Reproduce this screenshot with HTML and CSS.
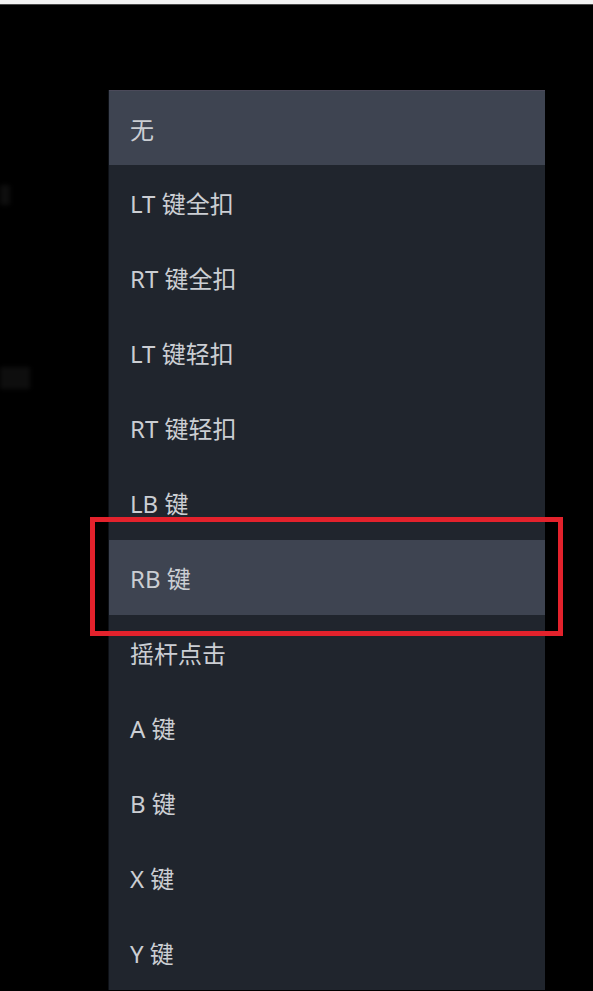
FILE: index.html
```html
<!DOCTYPE html>
<html lang="zh-CN">
<head>
    <meta charset="UTF-8">
    <meta name="viewport" content="width=device-width, initial-scale=1.0">
    <title>按键选择</title>
    <link rel="stylesheet" href="styles.css">
</head>
<body>
    <div class="top-strip"></div>

    <!-- dimmed page behind the dropdown -->
    <div class="backdrop">
        <div class="ghost ghost-one"></div>
        <div class="ghost ghost-two"></div>
    </div>

    <div class="screen">
        <ul class="menu">
            <li class="menu-item active">无</li>
            <li class="menu-item">LT 键全扣</li>
            <li class="menu-item">RT 键全扣</li>
            <li class="menu-item">LT 键轻扣</li>
            <li class="menu-item">RT 键轻扣</li>
            <li class="menu-item">LB 键</li>
            <li class="menu-item active">RB 键</li>
            <li class="menu-item">摇杆点击</li>
            <li class="menu-item">A 键</li>
            <li class="menu-item">B 键</li>
            <li class="menu-item">X 键</li>
            <li class="menu-item">Y 键</li>
        </ul>
        <div class="mark"></div>
    </div>
</body>
</html>
```

FILE: styles.css
```css
/* Global Styles */
html, body {
    height: 100%;
}

body {
    margin: 0;
    padding: 0;
    background-color: #000;
    font-family: "Noto Sans", "Noto Sans CJK SC", sans-serif;
    color: #cbced3;
    overflow: hidden;
    position: relative;
}

.top-strip {
    height: 4px;
    background: #f2f2f2;
    border-bottom: 1px solid #4a4a4a;
}

/* Dimmed page behind */
.backdrop {
    position: absolute;
    inset: 5px 0 0 0;
    pointer-events: none;
}

.ghost {
    position: absolute;
    left: 0;
    background: #0e0e0e;
    filter: blur(2px);
}

.ghost-one {
    top: 180px;
    width: 10px;
    height: 20px;
}

.ghost-two {
    top: 362px;
    width: 30px;
    height: 22px;
}

/* Dropdown */
.screen {
    position: relative;
    padding-top: 85px;
}

.menu {
    list-style: none;
    margin: 0 0 0 108px;
    padding: 0;
    width: 437px;
    background: #20252d;
    border-left: 1px solid #0d1016;
    box-sizing: border-box;
}

.menu-item {
    height: 75px;
    display: flex;
    align-items: center;
    padding-left: 21px;
    font-size: 24px;
}

.menu-item.active {
    background: #3e4451;
}

.menu-item:first-child {
    border-top: 1px solid #4b4a5a;
    height: 74px;
}

/* Red annotation box */
.mark {
    position: absolute;
    left: 90px;
    top: 512px;
    width: 473px;
    height: 119px;
    border: 5px solid #e3222c;
    box-sizing: border-box;
}
```
